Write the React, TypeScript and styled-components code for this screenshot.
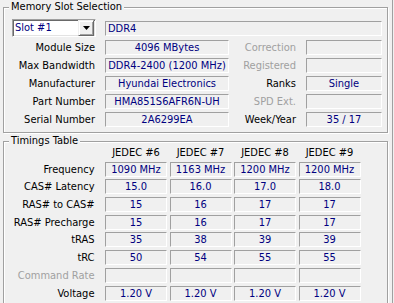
import React from 'react';
import styled, { createGlobalStyle } from 'styled-components';

const GlobalStyle = createGlobalStyle`
  html, body { margin: 0; padding: 0; background: #f0f0f0; }
  body {
    width: 394px; height: 303px; overflow: hidden;
    font-family: Tahoma, "DejaVu Sans Condensed", "DejaVu Sans", sans-serif;
    font-size: 11px; color: #000;
  }
`;

const Page = styled.div`
  width: 393px; height: 303px; box-sizing: border-box;
  border-right: 1px solid #a0a0a0;
  padding: 7px 0 0 3px;
  display: flex; flex-direction: column; gap: 8px;
  overflow: hidden;
`;

const Group = styled.section`
  position: relative; box-sizing: border-box; width: 385px;
  border: 1px solid #a0a0a0;
  box-shadow: inset 1px 1px 0 #fff, 1px 1px 0 #fff;
  padding: 11px 0 5px 8px;
  flex-shrink: 0;
`;

const TimingGroup = styled(Group)`
  padding: 4px 0 4px 8px;
`;

const GroupTitle = styled.span`
  position: absolute; left: 5px; top: -8px;
  padding: 0 2px; background: #f0f0f0; line-height: 14px; white-space: nowrap;
`;

const SlotGrid = styled.div`
  display: grid;
  grid-template-columns: 93px 124px 77px 76px;
  grid-template-rows: 18px repeat(5, 15px);
  row-gap: 3px;
  align-items: center;
`;

const Label = styled.div<{ $disabled?: boolean }>`
  text-align: right; padding-right: 10px; white-space: nowrap;
  color: ${p => (p.$disabled ? '#a0a0a0' : '#000')};
  line-height: 15px;
`;

const Field = styled.div<{ $align?: 'left' | 'center'; $span?: number }>`
  box-sizing: border-box; height: 15px; line-height: 13px;
  border: 1px solid; border-color: #a0a0a0 #fff #fff #a0a0a0;
  color: #000080; white-space: nowrap; overflow: hidden;
  text-align: ${p => p.$align ?? 'center'};
  padding-left: ${p => (p.$align === 'left' ? '2px' : '0')};
  grid-column: ${p => (p.$span ? `span ${p.$span}` : 'auto')};
`;

const Combo = styled.div`
  box-sizing: border-box; width: 84px; height: 18px;
  display: flex; align-items: center; justify-content: space-between;
  background: #fff;
  border: 1px solid; border-color: #a0a0a0 #fff #fff #a0a0a0;
  box-shadow: inset 1px 1px 0 #696969, inset -1px -1px 0 #e3e3e3;
  padding: 1px 1px 1px 1px;
  color: #000080;
`;

const ComboText = styled.span`
  padding-left: 1px; line-height: 14px;
`;

const ComboButton = styled.div`
  box-sizing: border-box; width: 16px; height: 16px;
  background: #f0f0f0;
  border: 1px solid; border-color: #f0f0f0 #696969 #696969 #f0f0f0;
  box-shadow: inset 1px 1px 0 #fff, inset -1px -1px 0 #a0a0a0;
  display: flex; align-items: center; justify-content: center;
`;

const TimingGrid = styled.div`
  display: grid;
  grid-template-columns: 90.5px repeat(4, 62px);
  grid-template-rows: 13px repeat(8, 15px);
  column-gap: 2.5px;
  row-gap: 2.7px;
  align-items: center;
`;

const TimingLabel = styled(Label)`
  padding-right: 8px;
`;

const Header = styled.div`
  text-align: center; line-height: 13px; white-space: nowrap;
`;

const slotRows: [string, string, string, string, boolean][] = [
  ['Module Size', '4096 MBytes', 'Correction', '', true],
  ['Max Bandwidth', 'DDR4-2400 (1200 MHz)', 'Registered', '', true],
  ['Manufacturer', 'Hyundai Electronics', 'Ranks', 'Single', false],
  ['Part Number', 'HMA851S6AFR6N-UH', 'SPD Ext.', '', true],
  ['Serial Number', '2A6299EA', 'Week/Year', '35 / 17', false],
];

const timingRows: [string, string[], boolean][] = [
  ['Frequency', ['1090 MHz', '1163 MHz', '1200 MHz', '1200 MHz'], false],
  ['CAS# Latency', ['15.0', '16.0', '17.0', '18.0'], false],
  ['RAS# to CAS#', ['15', '16', '17', '17'], false],
  ['RAS# Precharge', ['15', '16', '17', '17'], false],
  ['tRAS', ['35', '38', '39', '39'], false],
  ['tRC', ['50', '54', '55', '55'], false],
  ['Command Rate', ['', '', '', ''], true],
  ['Voltage', ['1.20 V', '1.20 V', '1.20 V', '1.20 V'], false],
];

export default function App() {
  return (
    <>
      <GlobalStyle />
      <Page>
        <Group>
          <GroupTitle>Memory Slot Selection</GroupTitle>
          <SlotGrid>
            <Combo>
              <ComboText>Slot #1</ComboText>
              <ComboButton>
                <svg width="7" height="4" viewBox="0 0 7 4">
                  <polygon points="0,0 7,0 3.5,4" fill="#000" />
                </svg>
              </ComboButton>
            </Combo>
            <Field $align="left" $span={3}>DDR4</Field>
            {slotRows.map(([l, v, rl, rv, dis]) => (
              <React.Fragment key={l}>
                <Label>{l}</Label>
                <Field>{v}</Field>
                <Label $disabled={dis}>{rl}</Label>
                <Field>{rv}</Field>
              </React.Fragment>
            ))}
          </SlotGrid>
        </Group>
        <TimingGroup>
          <GroupTitle>Timings Table</GroupTitle>
          <TimingGrid>
            <div />
            {['JEDEC #6', 'JEDEC #7', 'JEDEC #8', 'JEDEC #9'].map(h => (
              <Header key={h}>{h}</Header>
            ))}
            {timingRows.map(([l, vals, dis]) => (
              <React.Fragment key={l}>
                <TimingLabel $disabled={dis}>{l}</TimingLabel>
                {vals.map((v, i) => (
                  <Field key={i}>{v}</Field>
                ))}
              </React.Fragment>
            ))}
          </TimingGrid>
        </TimingGroup>
      </Page>
    </>
  );
}
